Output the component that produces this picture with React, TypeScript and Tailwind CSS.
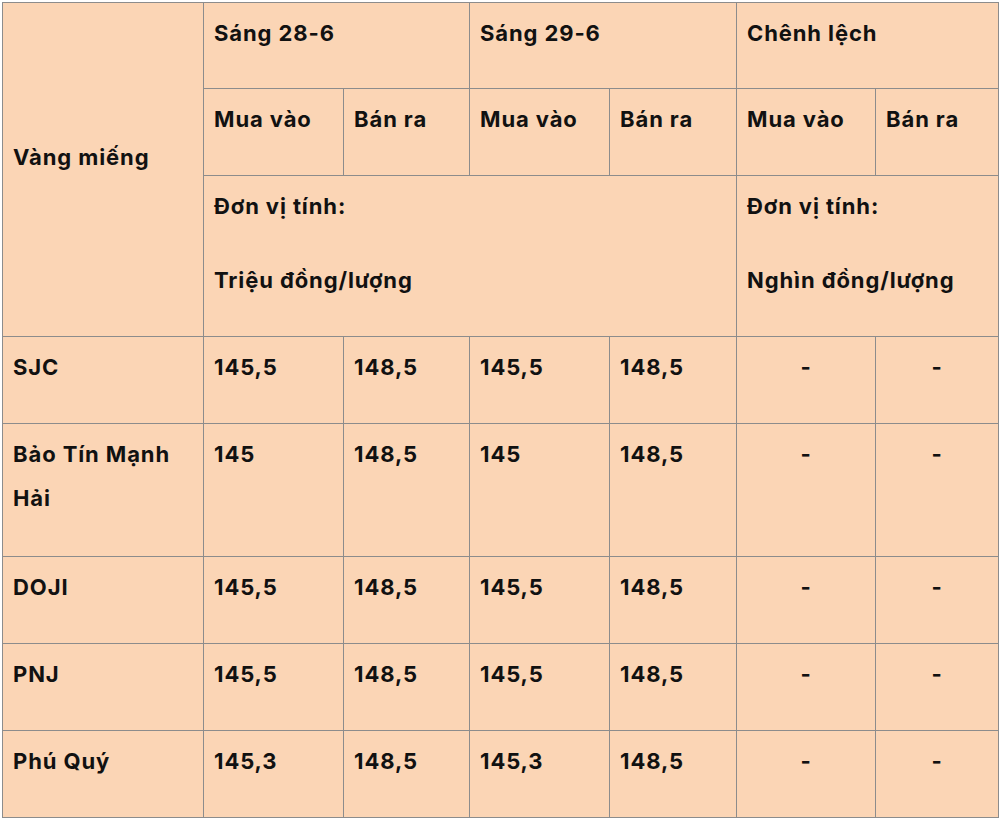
const rows = [
  { name: "SJC", buy1: "145,5", sell1: "148,5", buy2: "145,5", sell2: "148,5" },
  { name: "Bảo Tín Mạnh Hải", buy1: "145", sell1: "148,5", buy2: "145", sell2: "148,5" },
  { name: "DOJI", buy1: "145,5", sell1: "148,5", buy2: "145,5", sell2: "148,5" },
  { name: "PNJ", buy1: "145,5", sell1: "148,5", buy2: "145,5", sell2: "148,5" },
  { name: "Phú Quý", buy1: "145,3", sell1: "148,5", buy2: "145,3", sell2: "148,5" },
];

const cell = "border border-[#8c8c8c] align-top px-[10px] pt-[8px] pb-[4px]";
const para = "leading-[44px] mb-[30px]";

function P({ children }: { children: React.ReactNode }) {
  return <p className={para}>{children}</p>;
}

export default function App() {
  return (
    <div className="bg-white min-h-[821px] pt-[2px] pl-[2px]">
      <table
        className="table-fixed border-collapse w-[996px] bg-[#fbd5b5] text-[#111] text-[22px] font-bold tracking-[0.9px]"
        style={{ fontFamily: 'Inter, "Liberation Sans", Arial, sans-serif' }}
      >
        <colgroup>
          <col className="w-[201px]" />
          <col className="w-[140px]" />
          <col className="w-[126px]" />
          <col className="w-[140px]" />
          <col className="w-[127px]" />
          <col className="w-[139px]" />
          <col className="w-[123px]" />
        </colgroup>
        <tbody>
          <tr>
            <td rowSpan={3} className="border border-[#8c8c8c] px-[10px] pt-[8px] pb-[4px] align-middle">
              <P>Vàng miếng</P>
            </td>
            <td colSpan={2} className="border border-[#8c8c8c] align-top px-[10px] pt-[8px] pb-[3px]">
              <P>Sáng 28-6</P>
            </td>
            <td colSpan={2} className="border border-[#8c8c8c] align-top px-[10px] pt-[8px] pb-[3px]">
              <P>Sáng 29-6</P>
            </td>
            <td colSpan={2} className="border border-[#8c8c8c] align-top px-[10px] pt-[8px] pb-[3px]">
              <P>Chênh lệch</P>
            </td>
          </tr>
          <tr>
            <td className={cell}>
              <P>Mua vào</P>
            </td>
            <td className={cell}>
              <P>Bán ra</P>
            </td>
            <td className={cell}>
              <P>Mua vào</P>
            </td>
            <td className={cell}>
              <P>Bán ra</P>
            </td>
            <td className={cell}>
              <P>Mua vào</P>
            </td>
            <td className={cell}>
              <P>Bán ra</P>
            </td>
          </tr>
          <tr>
            <td colSpan={4} className={cell}>
              <P>Đơn vị tính:</P>
              <P>Triệu đồng/lượng</P>
            </td>
            <td colSpan={2} className={cell}>
              <P>Đơn vị tính:</P>
              <P>Nghìn đồng/lượng</P>
            </td>
          </tr>
          {rows.map((r, i) => (
            <tr key={r.name}>
              <td className={i === 1 ? `${cell} pb-[6px]` : cell}>
                <p className={i === 1 ? "leading-[44px] mb-[30px] pr-[20px]" : para}>{r.name}</p>
              </td>
              <td className={cell}>
                <P>{r.buy1}</P>
              </td>
              <td className={cell}>
                <P>{r.sell1}</P>
              </td>
              <td className={cell}>
                <P>{r.buy2}</P>
              </td>
              <td className={cell}>
                <P>{r.sell2}</P>
              </td>
              <td className={`${cell} text-center`}>
                <P>-</P>
              </td>
              <td className={`${cell} text-center`}>
                <P>-</P>
              </td>
            </tr>
          ))}
        </tbody>
      </table>
    </div>
  );
}
